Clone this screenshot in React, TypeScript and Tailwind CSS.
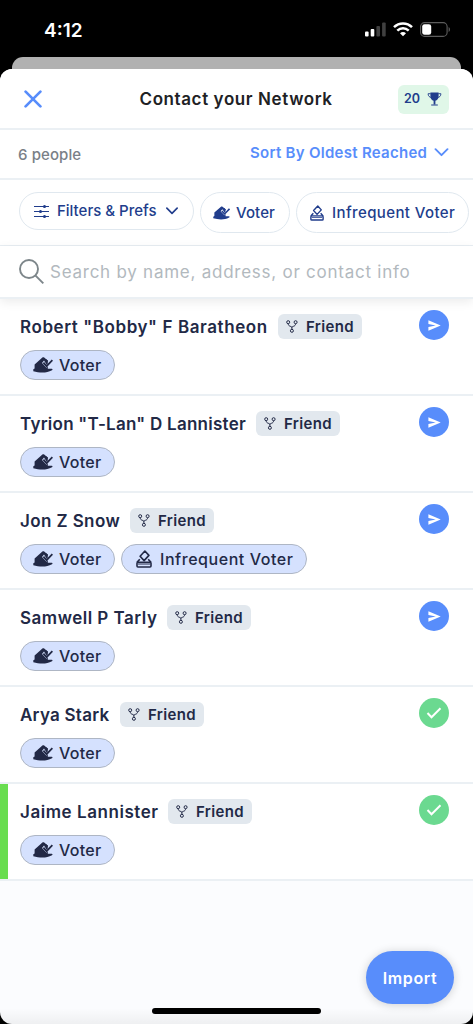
import clsx from "clsx";

type Person = {
  name: string;
  nameClass: string;
  infrequent?: boolean;
  done?: boolean;
  active?: boolean;
};

const people: Person[] = [
  { name: 'Robert "Bobby" F Baratheon', nameClass: "w-[248px] tracking-[0.58px]" },
  { name: 'Tyrion "T-Lan" D Lannister', nameClass: "w-[226px] tracking-[0.25px]" },
  { name: "Jon Z Snow", nameClass: "w-[100px] tracking-[0.4px]", infrequent: true },
  { name: "Samwell P Tarly", nameClass: "w-[137px] tracking-[0.5px]" },
  { name: "Arya Stark", nameClass: "w-[90px] tracking-[0.25px]", done: true },
  { name: "Jaime Lannister", nameClass: "w-[138px] tracking-[0.55px]", done: true, active: true },
];

function TrophyIcon() {
  return (
    <svg viewBox="0 0 14 14" className="h-[14px] w-[15px] shrink-0" fill="none" stroke="currentColor">
      <path d="M2.900.4h8.200v3.800c0 2.500-1.500 4-3.200 4.600v3.600H6.100V8.800C4.400 8.200 2.900 6.700 2.900 4.200Z" fill="currentColor" stroke="none" />
      <path d="M3.200 1.700H.6c0 2.300 1.200 3.500 3.500 3.900M10.800 1.700h2.600c0 2.300-1.200 3.500-3.500 3.900" strokeWidth="0.9" />
      <path d="M3.700 13h6.600" strokeWidth="1.100" />
    </svg>
  );
}

function VoterIcon({ className, cut }: { className?: string; cut: string }) {
  return (
    <svg viewBox="0 0 20 16" className={clsx("shrink-0", className)}>
      <path
        d="M1.600 7.400 9.400.6c.6-.5 1.200-.5 1.800 0l3.600 3v8.100h4c.9 0 1 1.100.2 1.500-3.100 1.600-6.200 2.300-9.500 2.300-3.300 0-6.200-.4-9.200-1.200v-2l1.300-.8Z"
        fill="currentColor"
      />
      {/* Gap between the hand and the check mark */}
      <path d="m11 3.600-2 2.300 4.500 4.800 5.500-5.600V2.500l-5.300 5.200" fill={cut} />
      <path d="m10.400 5.600 3.200 3.500 5.800-6" fill="none" stroke="currentColor" strokeWidth="1.800" />
      <path d="m12.200 3.400 1.800 1.700 1.200-1.200-2.300-2Z" fill="currentColor" />
    </svg>
  );
}

function BallotIcon({ className }: { className?: string }) {
  return (
    <svg
      viewBox="0 0 16 18"
      className={clsx("shrink-0", className)}
      fill="none"
      stroke="currentColor"
      strokeWidth="1.600"
      strokeLinejoin="round"
    >
      <path d="m8.900 1 4 4.400-4.800 5.200-4-4.400Z" />
      <path d="M3.800 9.200 1 12.400M12.200 9.200l2.800 3.200" />
      <rect x="1" y="12.300" width="14" height="4.700" rx="1" />
      <path d="M2 14h12" strokeWidth="1" />
    </svg>
  );
}

function ForkIcon() {
  return (
    <svg viewBox="0 0 12 13" className="h-[13px] w-[12px] shrink-0" fill="none" stroke="currentColor" strokeWidth="1">
      <circle cx="2.200" cy="2.200" r="1.500" />
      <circle cx="9.600" cy="2.200" r="1.500" />
      <circle cx="5.900" cy="10.800" r="1.500" />
      <path d="M2.200 3.700c.1 1.600.8 2.100 1.900 2.500.6.200 1.100.4 1.800 1 .7-.6 1.200-.8 1.800-1 1.100-.4 1.800-.9 1.900-2.500M5.900 7v2.300" />
    </svg>
  );
}

function Chevron({ className }: { className?: string }) {
  return (
    <svg
      viewBox="0 0 14 9"
      className={clsx("shrink-0", className)}
      fill="none"
      stroke="currentColor"
      strokeWidth="1.900"
      strokeLinecap="round"
      strokeLinejoin="round"
    >
      <path d="m1 1.200 6 6 6-6" />
    </svg>
  );
}

function StatusBar() {
  return (
    <div className="flex h-[57px] items-start justify-between pr-[22px] pl-[44px] text-white">
      <span className="mt-[19px] text-[19px] leading-6 font-semibold">4:12</span>
      <div className="mt-[22px] flex items-center">
        <svg viewBox="0 0 21 15" className="h-[15px] w-[21px]" fill="currentColor">
          <rect x="0" y="9.500" width="3.600" height="5" rx="1" />
          <rect x="5.700" y="7" width="3.600" height="7.500" rx="1" />
          <rect x="11.400" y="4" width="3.600" height="10.500" rx="1" opacity=".25" />
          <rect x="17.100" y="0.500" width="3.600" height="14" rx="1" opacity=".25" />
        </svg>
        <svg viewBox="0 0 20 15" className="ml-[7px] h-[15px] w-[20px]" fill="none" stroke="currentColor" strokeWidth="2.500">
          <path d="M1 5.200c5-5 13-5 18 0M4.300 8.600c3.300-3.200 8.100-3.200 11.400 0" />
          <path d="M7 11.200c1.700-1.500 4.300-1.500 6 0l-3 3.100Z" fill="currentColor" stroke="none" />
        </svg>
        <svg viewBox="0 0 31 15" className="ml-[7px] h-[15px] w-[31px]">
          <rect x=".6" y=".6" width="26.500" height="13.800" rx="4" fill="none" stroke="#5c5c5c" strokeWidth="1.100" />
          <rect x="2.200" y="2.200" width="9" height="10.600" rx="2.300" fill="white" />
          <path d="M28.600 5v5c1.800-.8 1.800-4.200 0-5Z" fill="#5c5c5c" />
        </svg>
      </div>
    </div>
  );
}

function PersonRow({ person }: { person: Person }) {
  return (
    <li className="relative flex h-[97px] justify-between border-b-2 border-[#ebf0f4] bg-white pr-[24px] pl-[20px]">
      {person.active && <span className="absolute inset-y-0 left-0 w-[8px] bg-[#68dd4f]" />}
      <div className="pt-[15px]">
        <div className="flex h-[25px] items-center">
          <h2 className={clsx("mt-[2px] text-[17px] font-semibold whitespace-nowrap", person.nameClass)}>{person.name}</h2>
          <span className="ml-[10px] flex h-[25px] w-[84px] items-center rounded-[6px] bg-[#e2e8ee] pl-[8px]">
            <ForkIcon />
            <span className="mt-[2px] ml-[8px] text-[15px] font-semibold tracking-[0.35px]">Friend</span>
          </span>
        </div>
        <div className="mt-[11px] flex gap-[6px]">
          <span className="flex h-[30px] w-[95px] items-center rounded-full border border-[#aeb6c4] bg-[#d5e1fe] pl-[12px]">
            <VoterIcon className="h-[16px] w-[20px]" cut="#d5e1fe" />
            <span className="ml-[6px] text-[16px] font-medium tracking-[0.3px]">Voter</span>
          </span>
          {person.infrequent && (
            <span className="flex h-[30px] w-[186px] items-center rounded-full border border-[#aeb6c4] bg-[#d5e1fe] pl-[14px]">
              <BallotIcon className="h-[18px] w-[16px]" />
              <span className="ml-[8px] text-[16px] font-medium tracking-[0.55px] whitespace-nowrap">Infrequent Voter</span>
            </span>
          )}
        </div>
      </div>
      <button
        className={clsx(
          "mt-[11px] grid h-[30px] w-[30px] place-items-center rounded-full text-white",
          person.done ? "bg-[#6bd990]" : "bg-[#588dfb]",
        )}
      >
        {person.done ? (
          <svg viewBox="0 0 16 12" className="h-[12px] w-[16px]" fill="none" stroke="currentColor" strokeWidth="2">
            <path d="m1.500 6 4 4.200L14.500 1.300" />
          </svg>
        ) : (
          <svg viewBox="0 0 13 11" className="h-[11px] w-[13px]" fill="currentColor">
            <path d="M.4.2 12.700 5.500.4 10.800V7l7.300-1.500L.4 4Z" />
          </svg>
        )}
      </button>
    </li>
  );
}

export default function App() {
  return (
    <div className="relative h-[1024px] w-[473px] overflow-hidden bg-black font-['Inter',sans-serif] text-[#222946]">
      <StatusBar />
      {/* Edge of the screen behind the sheet */}
      <div className="mx-[12px] h-[12px] rounded-t-[11px] bg-[#b1b1b1]" />

      <main className="flex h-[955px] flex-col overflow-hidden rounded-t-[12px] rounded-b-[12px] bg-[#fbfcfe]">
        <header className="flex h-[61px] shrink-0 items-center justify-between border-b-2 border-[#ebf0f4] bg-white pt-px pr-[24px] pl-[24px]">
          <svg viewBox="0 0 18 18" className="h-[18px] w-[18px]" stroke="#588dfb" strokeWidth="2.700" strokeLinecap="round">
            <path d="m1.600 1.600 14.800 14.800M16.400 1.600 1.600 16.400" />
          </svg>
          <h1 className="mt-px ml-[32px] w-[193px] text-[17px] font-semibold tracking-[0.6px] whitespace-nowrap text-[#202124]">
            Contact your Network
          </h1>
          <span className="flex h-[29px] w-[51px] items-center rounded-[6px] bg-[#e0f7e8] pl-[6px] text-[#213d8c]">
            <span className="mt-px w-[23px] text-[12.500px] font-semibold">20</span>
            <TrophyIcon />
          </span>
        </header>

        <div className="flex h-[50px] shrink-0 items-center justify-between border-b-2 border-[#ebf0f4] bg-white pr-[24px] pl-[18px]">
          <span className="mt-[2px] text-[15px] font-medium tracking-[0.1px] text-[#7a8087]">6 people</span>
          <button className="-mt-px flex items-center text-[#588dfb]">
            <span className="w-[184px] text-left text-[15px] font-semibold tracking-[0.28px] whitespace-nowrap">
              Sort By Oldest Reached
            </span>
            <Chevron className="-mt-[2px] h-[9px] w-[15px]" />
          </button>
        </div>

        <div className="flex h-[66px] shrink-0 items-start gap-[6px] border-b border-[#e8eef3] bg-white pt-[12px] pl-[19px] text-[#213d8c]">
          <button className="flex h-[38px] w-[175px] shrink-0 items-center rounded-full border border-[#e0e8ef] pl-[14px]">
            <svg viewBox="0 0 15 13" className="h-[13px] w-[15px]" fill="currentColor" stroke="currentColor" strokeWidth="1.200">
              <path d="M0 1.500h15M0 6.500h15M0 11.500h15" />
              <circle cx="10.500" cy="1.500" r=".9" />
              <circle cx="6.500" cy="6.500" r=".9" />
              <circle cx="10.500" cy="11.500" r=".9" />
            </svg>
            <span className="ml-[8px] w-[109px] text-left text-[15px] font-medium whitespace-nowrap">
              Filters &amp; Prefs
            </span>
            <Chevron className="h-[8px] w-[12px]" />
          </button>
          <button className="flex h-[41px] w-[90px] shrink-0 items-center rounded-full border border-[#e0e8ef] pl-[12px]">
            <VoterIcon className="h-[14px] w-[17px]" cut="#ffffff" />
            <span className="mt-px ml-[6px] text-[15px] font-medium tracking-[0.1px]">Voter</span>
          </button>
          <button className="flex h-[41px] w-[173px] shrink-0 items-center rounded-full border border-[#e0e8ef] pl-[13px]">
            <BallotIcon className="h-[16px] w-[14px]" />
            <span className="mt-px ml-[8px] text-[15px] font-medium tracking-[0.4px] whitespace-nowrap">Infrequent Voter</span>
          </button>
        </div>

        <label className="z-10 flex h-[53px] shrink-0 items-center border-b-2 border-[#ebf0f4] bg-white pl-[19px] shadow-[0_3px_10px_rgba(0,0,0,0.08)]">
          <svg viewBox="0 0 25 25" className="h-[25px] w-[25px]" fill="none" stroke="#7d868a" strokeWidth="1.900">
            <circle cx="10" cy="10" r="9" />
            <path d="m16.300 16.300 8 8" />
          </svg>
          <span className="mt-[2px] ml-[6px] text-[17px] tracking-[0.75px] whitespace-nowrap text-[#b2b9be]">
            Search by name, address, or contact info
          </span>
        </label>

        <ul>
          {people.map((person) => (
            <PersonRow key={person.name} person={person} />
          ))}
        </ul>
      </main>

      <button className="absolute right-[19px] bottom-[20px] h-[53px] w-[88px] rounded-full bg-[#588dfb] text-[16px] font-semibold tracking-[0.6px] text-white shadow-[0_1px_10px_rgba(0,0,0,0.18)]">
        Import
      </button>
      <div className="absolute bottom-[10px] left-[152px] h-[6px] w-[169px] rounded-full bg-black" />
      <div className="pointer-events-none absolute inset-x-0 bottom-0 h-[16px] rounded-b-[12px] bg-linear-to-b from-transparent to-black/5" />
    </div>
  );
}
